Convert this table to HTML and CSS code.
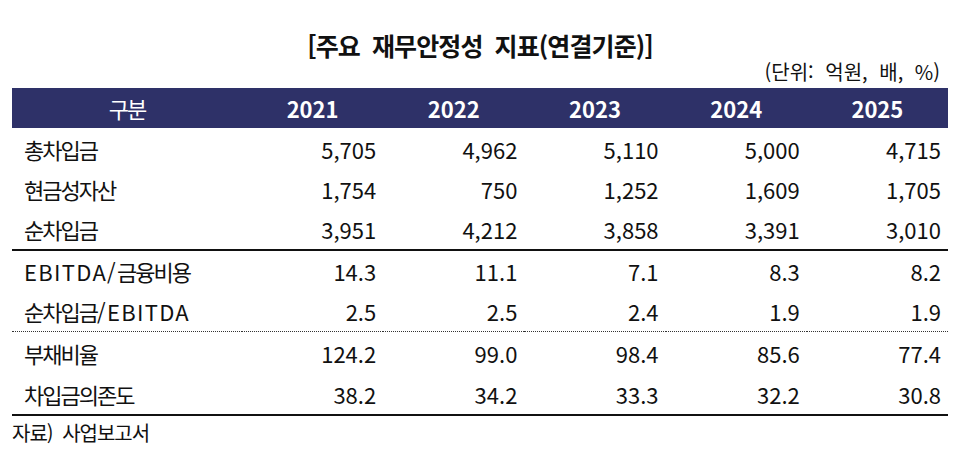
FILE: index.html
```html
<!DOCTYPE html>
<html lang="ko">
<head>
<meta charset="utf-8">
<link rel="stylesheet" href="styles.css">
</head>
<body>
<div class="page">
  <h1 class="title">[주요 재무안정성 지표(연결기준)]</h1>
  <div class="unit">(단위: 억원, 배, %)</div>
  <table class="fin">
    <thead>
      <tr>
        <th class="label-h"><span class="ko">구분</span></th>
        <th class="year">2021</th>
        <th class="year">2022</th>
        <th class="year">2023</th>
        <th class="year">2024</th>
        <th class="year">2025</th>
      </tr>
    </thead>
    <tbody>
      <tr class="r-first"><td><span class="ko">총차입금</span></td><td>5,705</td><td>4,962</td><td>5,110</td><td>5,000</td><td>4,715</td></tr>
      <tr><td><span class="ko">현금성자산</span></td><td>1,754</td><td>750</td><td>1,252</td><td>1,609</td><td>1,705</td></tr>
      <tr class="r-solid"><td><span class="ko">순차입금</span></td><td>3,951</td><td>4,212</td><td>3,858</td><td>3,391</td><td>3,010</td></tr>
      <tr><td><span class="en">EBITDA/</span><span class="ko">금융비용</span></td><td>14.3</td><td>11.1</td><td>7.1</td><td>8.3</td><td>8.2</td></tr>
      <tr class="r-dot"><td><span class="ko">순차입금</span><span class="en">/EBITDA</span></td><td>2.5</td><td>2.5</td><td>2.4</td><td>1.9</td><td>1.9</td></tr>
      <tr class="r-tall"><td><span class="ko">부채비율</span></td><td>124.2</td><td>99.0</td><td>98.4</td><td>85.6</td><td>77.4</td></tr>
      <tr class="r-tall r-solid"><td><span class="ko">차입금의존도</span></td><td>38.2</td><td>34.2</td><td>33.3</td><td>32.2</td><td>30.8</td></tr>
    </tbody>
  </table>
  <div class="source">자료) 사업보고서</div>
</div>
</body>
</html>
```
FILE: styles.css
```css
html, body {
  margin: 0;
  padding: 0;
  background: #ffffff;
}
body {
  font-family: "Noto Sans CJK KR", "Noto Sans", sans-serif;
  color: #111111;
}
.page {
  width: 936px;
  padding: 30px 16px 0 12px;
}
.title {
  margin: 0;
  font-size: 25px;
  line-height: 30px;
  font-weight: 700;
  text-align: center;
  letter-spacing: -0.9px;
  word-spacing: 6px;
}
.unit {
  font-size: 20px;
  line-height: 24px;
  text-align: right;
  padding-right: 8px;
  margin-bottom: 4px;
  letter-spacing: 0;
  word-spacing: 6px;
}
.fin {
  width: 936px;
  border-collapse: collapse;
  table-layout: fixed;
}
.fin th {
  background: #2e3168;
  color: #ffffff;
  height: 40px;
  padding: 0;
  font-size: 22px;
  line-height: 26px;
}
.fin th.label-h {
  width: 230px;
  font-weight: 400;
}
.fin th.year {
  font-weight: 700;
}
.fin td {
  height: 40px;
  padding: 0 7px 0 0;
  font-size: 22px;
  line-height: 26px;
  text-align: right;
}
.fin td:first-child {
  text-align: left;
  padding: 0 0 0 12px;
}
.ko {
  letter-spacing: -2px;
}
.en {
  letter-spacing: 1.3px;
}
.fin tr.r-first td {
  height: 41px;
}
.fin tr.r-tall td {
  height: 41px;
}
.fin tr.r-solid td {
  border-bottom: 2px solid #111111;
}
.fin tr.r-dot td {
  border-bottom: 1px dotted #333333;
}
.source {
  font-size: 20px;
  line-height: 24px;
  margin-top: 5px;
  letter-spacing: -1px;
  word-spacing: 5px;
}
```
